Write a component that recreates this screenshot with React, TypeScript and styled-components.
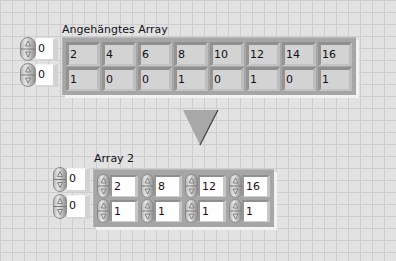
import styled, { createGlobalStyle } from "styled-components";

const GlobalStyle = createGlobalStyle`
  html, body { margin: 0; padding: 0; }
  body {
    width: 396px;
    height: 261px;
    overflow: hidden;
    background-color: #e2e2e2;
    background-image:
      linear-gradient(to right, #cdcdcd 1px, transparent 1px),
      linear-gradient(to bottom, #cdcdcd 1px, transparent 1px);
    background-size: 12px 12px;
    font-family: "DejaVu Sans", sans-serif;
    font-size: 11px;
    color: #101018;
  }
`;

const Panel = styled.div`
  display: flex;
  flex-direction: column;
  align-items: flex-start;
  padding-top: 23px;
`;

const Cluster = styled.div<{ $left: number; $gap: number }>`
  display: grid;
  grid-template-columns: auto auto;
  column-gap: ${(p) => p.$gap}px;
  margin-left: ${(p) => p.$left}px;
`;

const Label = styled.div<{ $indent: number; $below: number }>`
  grid-column: 2;
  padding-left: ${(p) => p.$indent}px;
  margin-bottom: ${(p) => p.$below}px;
  height: 14px;
  line-height: 14px;
  white-space: nowrap;
`;

const IndexColumn = styled.div<{ $shift: number; $gap: number }>`
  grid-column: 1;
  display: flex;
  flex-direction: column;
  gap: ${(p) => p.$gap}px;
  margin-top: ${(p) => p.$shift}px;
`;

const IndexRow = styled.div`
  display: flex;
  align-items: center;
`;

const IndexBox = styled.div<{ $w: number; $h: number }>`
  box-sizing: border-box;
  width: ${(p) => p.$w}px;
  height: ${(p) => p.$h}px;
  background: #fff;
  border-top: 1px solid #f4f4f4;
  border-right: 5px solid #d2d2d2;
  border-bottom: 2px solid #d6d6d6;
  padding-left: 2px;
  line-height: ${(p) => p.$h - 4}px;
`;

const Frame = styled.div<{ $cols: number; $colGap: number }>`
  display: grid;
  grid-template-columns: repeat(${(p) => p.$cols}, auto);
  column-gap: ${(p) => p.$colGap}px;
  row-gap: 1px;
  padding: 4px 4px 4px 3px;
  background: #a6a6a6;
  border-top: 1px solid #bcbcbc;
  border-left: 1px solid #b4b4b4;
  box-shadow: 3px 3px 0 #f2f2f2;
  margin-right: 3px;
`;

const Cell = styled.div`
  box-sizing: border-box;
  width: 34px;
  height: 24px;
  background: #d3d3d3;
  border-style: solid;
  border-width: 3px 3px 2px 3px;
  border-color: #8e8e8e #bdbdbd #c4c4c4 #939393;
  padding-left: 1px;
  line-height: 19px;
`;

const Element = styled.div`
  display: flex;
  align-items: center;
`;

const ElementBox = styled.div`
  box-sizing: border-box;
  width: 28px;
  height: 22px;
  background: #fff;
  border-style: solid;
  border-width: 2px 3px 1px 2px;
  border-color: #8f8f8f #c6c6c6 #cfcfcf #979797;
  padding-left: 2px;
  line-height: 19px;
  color: #2a0a14;
`;

const Arrow = styled.svg`
  display: block;
  margin: 15px 0 6px 183px;
`;

function Spinner({ w, h }: { w: number; h: number }) {
  const mid = h / 2;
  const cx = w / 2;
  return (
    <svg width={w} height={h} viewBox={`0 0 ${w} ${h}`} style={{ display: "block", flex: "none" }}>
      <defs>
        <linearGradient id={`sp${w}${h}`} x1="0" x2="1" y1="0" y2="0">
          <stop offset="0" stopColor="#b4b4b4" />
          <stop offset="0.35" stopColor="#e6e6e6" />
          <stop offset="1" stopColor="#8c8c8c" />
        </linearGradient>
      </defs>
      <rect x="0.5" y="0.5" width={w - 1} height={h - 1} rx={w / 2 - 0.5} ry={w / 2 - 0.5} fill={`url(#sp${w}${h})`} stroke="#8a8a8a" />
      <line x1="1" x2={w - 1} y1={mid} y2={mid} stroke="#7a7a7a" />
      <path d={`M${cx - 2.5} ${mid - 3} L${cx} ${mid - 8} L${cx + 2.5} ${mid - 3} Z`} fill="#d8d8d8" stroke="#6e6e6e" strokeWidth="0.8" />
      <path d={`M${cx - 2.5} ${mid + 3} L${cx} ${mid + 8} L${cx + 2.5} ${mid + 3} Z`} fill="#d8d8d8" stroke="#6e6e6e" strokeWidth="0.8" />
    </svg>
  );
}

const topRows = [
  [2, 4, 6, 8, 10, 12, 14, 16],
  [1, 0, 0, 1, 0, 1, 0, 1],
];

const bottomRows = [
  [2, 8, 12, 16],
  [1, 1, 1, 1],
];

export default function App() {
  return (
    <>
      <GlobalStyle />
      <Panel>
        <Cluster $left={20} $gap={4}>
          <Label $indent={0} $below={0}>Angehängtes Array</Label>
          <IndexColumn $shift={0} $gap={2}>
            {[0, 1].map((i) => (
              <IndexRow key={i}>
                <Spinner w={16} h={24} />
                <IndexBox $w={22} $h={23}>0</IndexBox>
              </IndexRow>
            ))}
          </IndexColumn>
          <Frame $cols={8} $colGap={2}>
            {topRows.flat().map((v, i) => (
              <Cell key={i}>{v}</Cell>
            ))}
          </Frame>
        </Cluster>

        <Arrow width="36" height="36" viewBox="0 0 36 36">
          <path d="M0 0 H35 L17 35 Z" fill="#a8a8a8" />
          <path d="M35 0 L17 35" stroke="#404040" strokeWidth="1.2" />
        </Arrow>

        <Cluster $left={53} $gap={3}>
          <Label $indent={1} $below={3}>Array 2</Label>
          <IndexColumn $shift={-2} $gap={2}>
            {[0, 1].map((i) => (
              <IndexRow key={i}>
                <Spinner w={14} h={25} />
                <IndexBox $w={23} $h={24}>0</IndexBox>
              </IndexRow>
            ))}
          </IndexColumn>
          <Frame $cols={4} $colGap={3}>
            {bottomRows.flat().map((v, i) => (
              <Element key={i}>
                <Spinner w={13} h={24} />
                <ElementBox>{v}</ElementBox>
              </Element>
            ))}
          </Frame>
        </Cluster>
      </Panel>
    </>
  );
}
